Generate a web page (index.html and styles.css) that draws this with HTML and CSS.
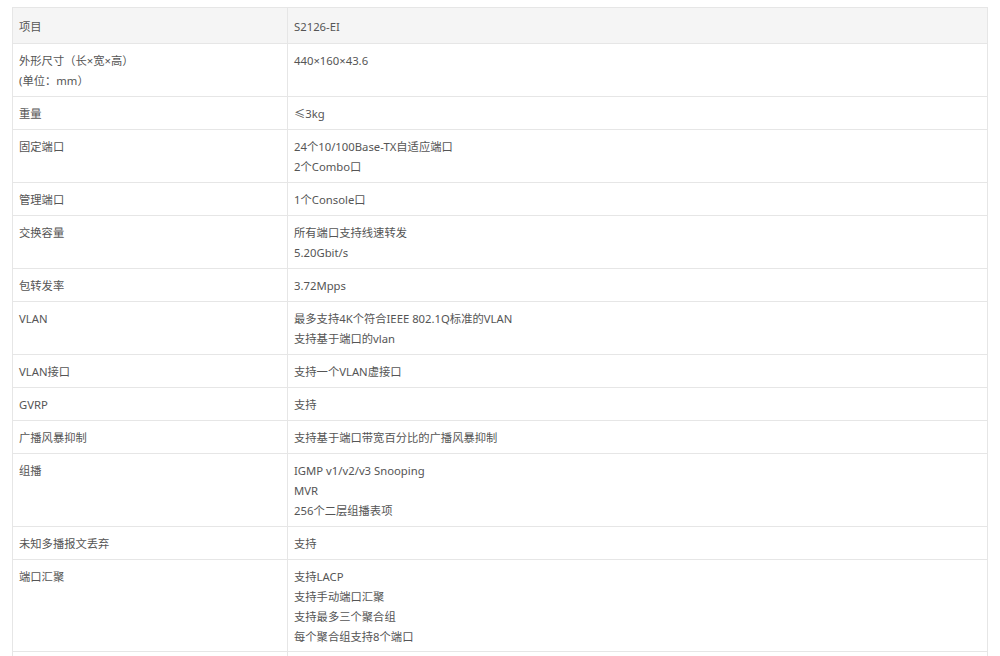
FILE: index.html
```html
<!DOCTYPE html>
<html lang="zh-CN">
<head>
<meta charset="utf-8">
<title>S2126-EI 规格</title>
<link rel="stylesheet" href="styles.css">
</head>
<body>
<table class="spec">
  <thead>
    <tr><th class="c1">项目</th><th>S2126-EI</th></tr>
  </thead>
  <tbody>
    <tr><td>外形尺寸（长×宽×高）<br>(单位：mm）</td><td>440×160×43.6</td></tr>
    <tr><td>重量</td><td>≤3kg</td></tr>
    <tr><td>固定端口</td><td>24个10/100Base-TX自适应端口<br>2个Combo口</td></tr>
    <tr><td>管理端口</td><td>1个Console口</td></tr>
    <tr><td>交换容量</td><td>所有端口支持线速转发<br>5.20Gbit/s</td></tr>
    <tr><td>包转发率</td><td>3.72Mpps</td></tr>
    <tr><td>VLAN</td><td>最多支持4K个符合IEEE 802.1Q标准的VLAN<br>支持基于端口的vlan</td></tr>
    <tr><td>VLAN接口</td><td>支持一个VLAN虚接口</td></tr>
    <tr><td>GVRP</td><td>支持</td></tr>
    <tr><td>广播风暴抑制</td><td>支持基于端口带宽百分比的广播风暴抑制</td></tr>
    <tr><td>组播</td><td>IGMP v1/v2/v3 Snooping<br>MVR<br>256个二层组播表项</td></tr>
    <tr><td>未知多播报文丢弃</td><td>支持</td></tr>
    <tr><td class="tall">端口汇聚</td><td class="tall">支持LACP<br>支持手动端口汇聚<br>支持最多三个聚合组<br>每个聚合组支持8个端口</td></tr>
    <tr class="more"><td></td><td></td></tr>
  </tbody>
</table>
</body>
</html>
```
FILE: styles.css
```css
html, body {
  margin: 0;
  padding: 0;
  background: #ffffff;
}
body {
  padding: 7px 0 0 12px;
  font-family: "Noto Sans", "Noto Sans CJK SC", sans-serif;
  font-size: 11.3px;
  color: #555555;
}
.spec {
  width: 976px;
  border-collapse: collapse;
  table-layout: fixed;
}
.spec th,
.spec td {
  border: 1px solid #e6e6e6;
  text-align: left;
  vertical-align: top;
  font-weight: normal;
  line-height: 20px;
  padding: 7px 6px 5px 6px;
}
.spec th {
  background: #f5f5f5;
  padding: 9px 6px 6px 6px;
}
.spec td.tall {
  padding-top: 7px;
  padding-bottom: 4px;
}
.spec .more td {
  height: 20px;
}
.spec .c1 {
  width: 262px;
}
```
